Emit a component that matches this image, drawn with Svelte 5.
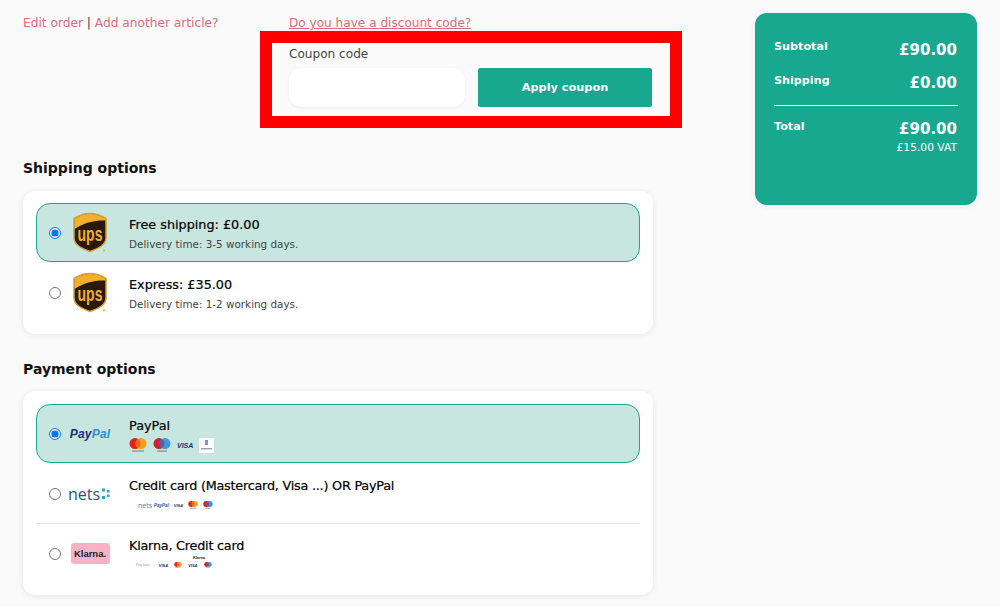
<script>
	const shipping = [
		{ title: 'Free shipping: £0.00', note: 'Delivery time: 3-5 working days.', checked: true },
		{ title: 'Express: £35.00', note: 'Delivery time: 1-2 working days.', checked: false }
	];
</script>

{#snippet mastercard(w = 18)}
	<svg width={w} height={w * 0.78} viewBox="0 0 18 14">
		<circle cx="6" cy="5.600" r="5.500" fill="#e2231a" />
		<circle cx="12" cy="5.600" r="5.500" fill="#f79e1b" />
		<path d="M9 1a5.500 5.500 0 0 1 0 9.200a5.500 5.500 0 0 1 0-9.200z" fill="#f26522" />
		<rect x="3" y="12.500" width="12" height="1" fill="#777" />
	</svg>
{/snippet}

{#snippet maestro(w = 18)}
	<svg width={w} height={w * 0.78} viewBox="0 0 18 14">
		<circle cx="6" cy="5.600" r="5.500" fill="#cc2131" />
		<circle cx="12" cy="5.600" r="5.500" fill="#3a9bd9" />
		<path d="M9 1a5.500 5.500 0 0 1 0 9.200a5.500 5.500 0 0 1 0-9.200z" fill="#6c5a9c" />
		<rect x="4" y="12.500" width="10" height="1" fill="#777" />
	</svg>
{/snippet}

{#snippet ups()}
	<svg class="ups" width="36" height="42" viewBox="0 0 36 42">
		<path d="M2 6.500C7.500 3 12.500 1.500 18 1.500s10.500 1.500 16 5V26c0 7-8 10.500-16 13.500C10 36.500 2 33 2 26z" fill="#2b1a0c" stroke="#d9a02c" stroke-width="1.500" />
		<path d="M2.500 6.800C7.500 3.500 12.500 2 18 2s10.500 1.500 15.500 4.800v1.700C23 8 12 10.500 2.500 17z" fill="#f0b02e" />
		<text x="18" y="19.300" transform="scale(1 1.5)" text-anchor="middle" class="ups-text">ups</text>
		<circle cx="32" cy="38.500" r="1" fill="#e9ab2c" />
	</svg>
{/snippet}

<div class="page">
	<main class="content">
		<div class="top">
			<p class="links"><a href="#edit">Edit order</a> | <a href="#add">Add another article?</a></p>
			<div class="discount">
				<a class="underlined" href="#code">Do you have a discount code?</a>
				<form class="coupon">
					<label for="coupon">Coupon code</label>
					<div class="coupon-row">
						<input id="coupon" type="text" />
						<button type="button">Apply coupon</button>
					</div>
				</form>
			</div>
		</div>

		<h2 class="first">Shipping options</h2>
		<section class="card">
			{#each shipping as s}
				<label class="option" class:selected={s.checked}>
					<input type="radio" name="shipping" checked={s.checked} />
					<span class="logo">{@render ups()}</span>
					<span class="info">
						<span class="title">{s.title}</span>
						<span class="note">{s.note}</span>
					</span>
				</label>
			{/each}
		</section>

		<h2>Payment options</h2>
		<section class="card payment">
			<label class="option selected">
				<input type="radio" name="payment" checked />
				<span class="logo"><span class="paypal">Pay<em>Pal</em></span></span>
				<span class="info">
					<span class="title">PayPal</span>
					<span class="cards">
						{@render mastercard()}
						{@render maestro()}
						<span class="visa">VISA</span>
						<span class="postcard">
							<svg width="15" height="15" viewBox="0 0 15 15">
								<rect width="15" height="15" fill="#fff" />
								<rect x="6" y="2" width="3" height="5" fill="#7d9bbd" />
								<rect x="2" y="10" width="11" height="1.500" fill="#9aa6b5" />
							</svg>
						</span>
					</span>
				</span>
			</label>
			<label class="option no-gap">
				<input type="radio" name="payment" />
				<span class="logo">
					<span class="nets">nets<svg width="10" height="12" viewBox="0 0 10 12">
						<rect x="0" y="0.500" width="3" height="3" fill="#2aa8c4" />
						<rect x="5" y="2" width="2.500" height="2.500" fill="#2aa8c4" />
						<rect x="5" y="6.500" width="2.500" height="2.500" fill="#2aa8c4" />
						<rect x="0" y="8" width="3" height="3" fill="#2aa8c4" />
					</svg></span>
				</span>
				<span class="info">
					<span class="title tight">Credit card (Mastercard, Visa ...) OR PayPal</span>
					<span class="cards small nets-cards">
						<span class="tiny-nets">nets</span>
						<span class="tiny-pp">PayPal</span>
						<span class="visa tiny">VISA</span>
						{@render mastercard(10)}
						{@render maestro(10)}
					</span>
				</span>
			</label>
			<hr />
			<label class="option">
				<input type="radio" name="payment" />
				<span class="logo"><span class="klarna">Klarna.</span></span>
				<span class="info">
					<span class="title tight">Klarna, Credit card</span>
					<span class="cards small klarna-cards">
						<span class="tiny-klarna">Klarna.</span>
						<span class="tiny-grey">Pay later</span>
						<span class="visa tiny">VISA</span>
						{@render mastercard(8)}
						<span class="visa tiny">VISA</span>
						{@render maestro(8)}
					</span>
				</span>
			</label>
		</section>
	</main>

	<aside class="summary">
		<div class="line first-line"><span>Subtotal</span><strong>£90.00</strong></div>
		<div class="line"><span>Shipping</span><strong>£0.00</strong></div>
		<div class="line total">
			<span>Total</span>
			<div class="amount"><strong>£90.00</strong><small>£15.00 VAT</small></div>
		</div>
	</aside>
</div>

<style>
	:global(body) {
		margin: 0;
		background: #fafafa;
		font-family: 'DejaVu Sans', sans-serif;
		color: #222;
	}

	.page {
		display: flex;
		align-items: flex-start;
		height: 607px;
		overflow: hidden;
		padding-left: 23px;
		box-sizing: border-box;
	}

	.content {
		width: 630px;
		flex: none;
	}

	.top {
		display: flex;
		height: 128px;
	}

	.links {
		margin: 16px 0 0;
		width: 266px;
		flex: none;
		font-size: 12.200px;
		line-height: 15px;
		color: #444;
	}

	a {
		color: #dc6b7c;
		text-decoration: none;
	}

	.discount {
		padding-top: 16px;
		font-size: 12.100px;
		line-height: 15px;
	}

	.underlined {
		display: block;
		text-decoration: underline;
		height: 15px;
	}

	.coupon {
		margin-left: -29px;
		width: 422px;
		height: 97px;
		box-sizing: border-box;
		border: 12px solid #f00;
		padding: 0 17px;
	}

	.coupon label {
		display: block;
		padding-top: 2px;
		color: #444;
		line-height: 19px;
	}

	.coupon-row {
		display: flex;
		gap: 13px;
		margin-top: 4px;
	}

	.coupon input {
		width: 176px;
		height: 39px;
		box-sizing: border-box;
		border: none;
		border-radius: 12px;
		background: #fff;
		box-shadow: 0 1px 3px rgba(0, 0, 0, 0.06);
	}

	.coupon button {
		width: 174px;
		height: 39px;
		border: none;
		border-radius: 2px;
		background: #17a88f;
		color: #fff;
		font: bold 11.300px 'DejaVu Sans', sans-serif;
	}

	h2 {
		margin: 26px 0 13px;
		font-size: 14px;
		line-height: 18px;
		font-weight: bold;
		color: #111;
	}

	h2.first {
		margin: 31px 0 14px;
	}

	.card {
		background: #fff;
		border-radius: 12px;
		padding: 12px 13px 11px;
		box-shadow: 0 1px 6px rgba(0, 0, 0, 0.09);
	}

	.card.payment {
		padding-top: 13px;
	}

	.option {
		display: flex;
		align-items: center;
		height: 59px;
		margin-bottom: 1px;
		box-sizing: border-box;
		border: 1.500px solid transparent;
		border-radius: 14px;
		padding-left: 11.500px;
	}

	.option.no-gap {
		margin-bottom: 0;
	}

	.option.selected {
		background: #c8e6e0;
		border-color: #1aa88f;
	}

	.option input {
		width: 12px;
		height: 12px;
		margin: 0;
		flex: none;
	}

	.logo {
		width: 40px;
		margin-left: 9.500px;
		flex: none;
		display: flex;
		justify-content: center;
	}

	.ups {
		display: block;
	}

	.ups-text {
		font: bold 14px 'Liberation Sans', sans-serif;
		fill: #f0b02e;
	}

	.info {
		margin-left: 19px;
		padding-top: 3px;
		display: flex;
		flex-direction: column;
	}

	.title {
		font-size: 12.800px;
		line-height: 16px;
		color: #000;
		-webkit-text-stroke: 0.2px #000;
	}

	.title.tight {
		letter-spacing: -0.23px;
	}

	.note {
		margin-top: 4px;
		font-size: 10.400px;
		line-height: 14px;
		color: #444;
	}

	.paypal {
		font: italic bold 12px 'Liberation Sans', sans-serif;
		color: #1b2f7a;
		letter-spacing: 0.2px;
	}

	.paypal em {
		color: #2a8fd0;
	}

	.nets {
		display: flex;
		align-items: center;
		gap: 2px;
		font: 16px 'Open Sans', sans-serif;
		color: #1d5a78;
	}

	.klarna {
		display: block;
		width: 39px;
		height: 21px;
		border-radius: 3px;
		background: #f7b2c6;
		font: bold 9.500px/21px 'Liberation Sans', sans-serif;
		color: #222;
		text-align: center;
	}

	.cards {
		display: flex;
		align-items: center;
		gap: 6px;
		margin-top: 4px;
		height: 15px;
	}

	.visa {
		font: italic bold 7px 'Liberation Sans', sans-serif;
		color: #1b2f6b;
	}

	.visa.tiny {
		font-size: 4px;
	}

	.postcard {
		display: block;
		height: 15px;
	}

	.small {
		position: relative;
		margin-left: 9px;
	}

	.nets-cards {
		gap: 5px;
	}

	.klarna-cards {
		margin-left: 7px;
		gap: 6px;
	}

	.tiny-nets {
		font: 7px 'Open Sans', sans-serif;
		color: #5d7d92;
	}

	.tiny-pp {
		font: italic bold 4.500px 'Liberation Sans', sans-serif;
		color: #2a5ca8;
		margin-left: -3px;
	}

	.tiny-grey {
		font: 3.500px 'Liberation Sans', sans-serif;
		color: #999;
		margin-right: 3px;
	}

	.tiny-klarna {
		position: absolute;
		top: -2px;
		left: 57px;
		font: bold 3.800px 'Liberation Sans', sans-serif;
		color: #222;
	}

	hr {
		border: none;
		border-top: 1px solid #e6e6e6;
		margin: 0;
	}

	.summary {
		margin: 13px 0 0 102px;
		width: 222px;
		height: 192px;
		box-sizing: border-box;
		flex: none;
		padding: 24px 19px 0;
		border-radius: 12px;
		background: #17a88f;
		color: #fff;
		box-shadow: 0 1px 6px rgba(0, 0, 0, 0.08);
	}

	.line {
		display: flex;
		justify-content: space-between;
		font-size: 11.200px;
		line-height: 20px;
		font-weight: bold;
		height: 34px;
	}

	.line strong {
		font-size: 15px;
		line-height: 24px;
		padding-right: 1px;
	}

	.first-line strong {
		margin-top: 1px;
	}

	.line.total {
		border-top: 1px solid #fff;
		padding-top: 11px;
	}

	.amount {
		display: flex;
		flex-direction: column;
		align-items: flex-end;
	}

	.amount small {
		padding-right: 1px;
		font-size: 10.700px;
		font-weight: normal;
		line-height: 13px;
	}
</style>
